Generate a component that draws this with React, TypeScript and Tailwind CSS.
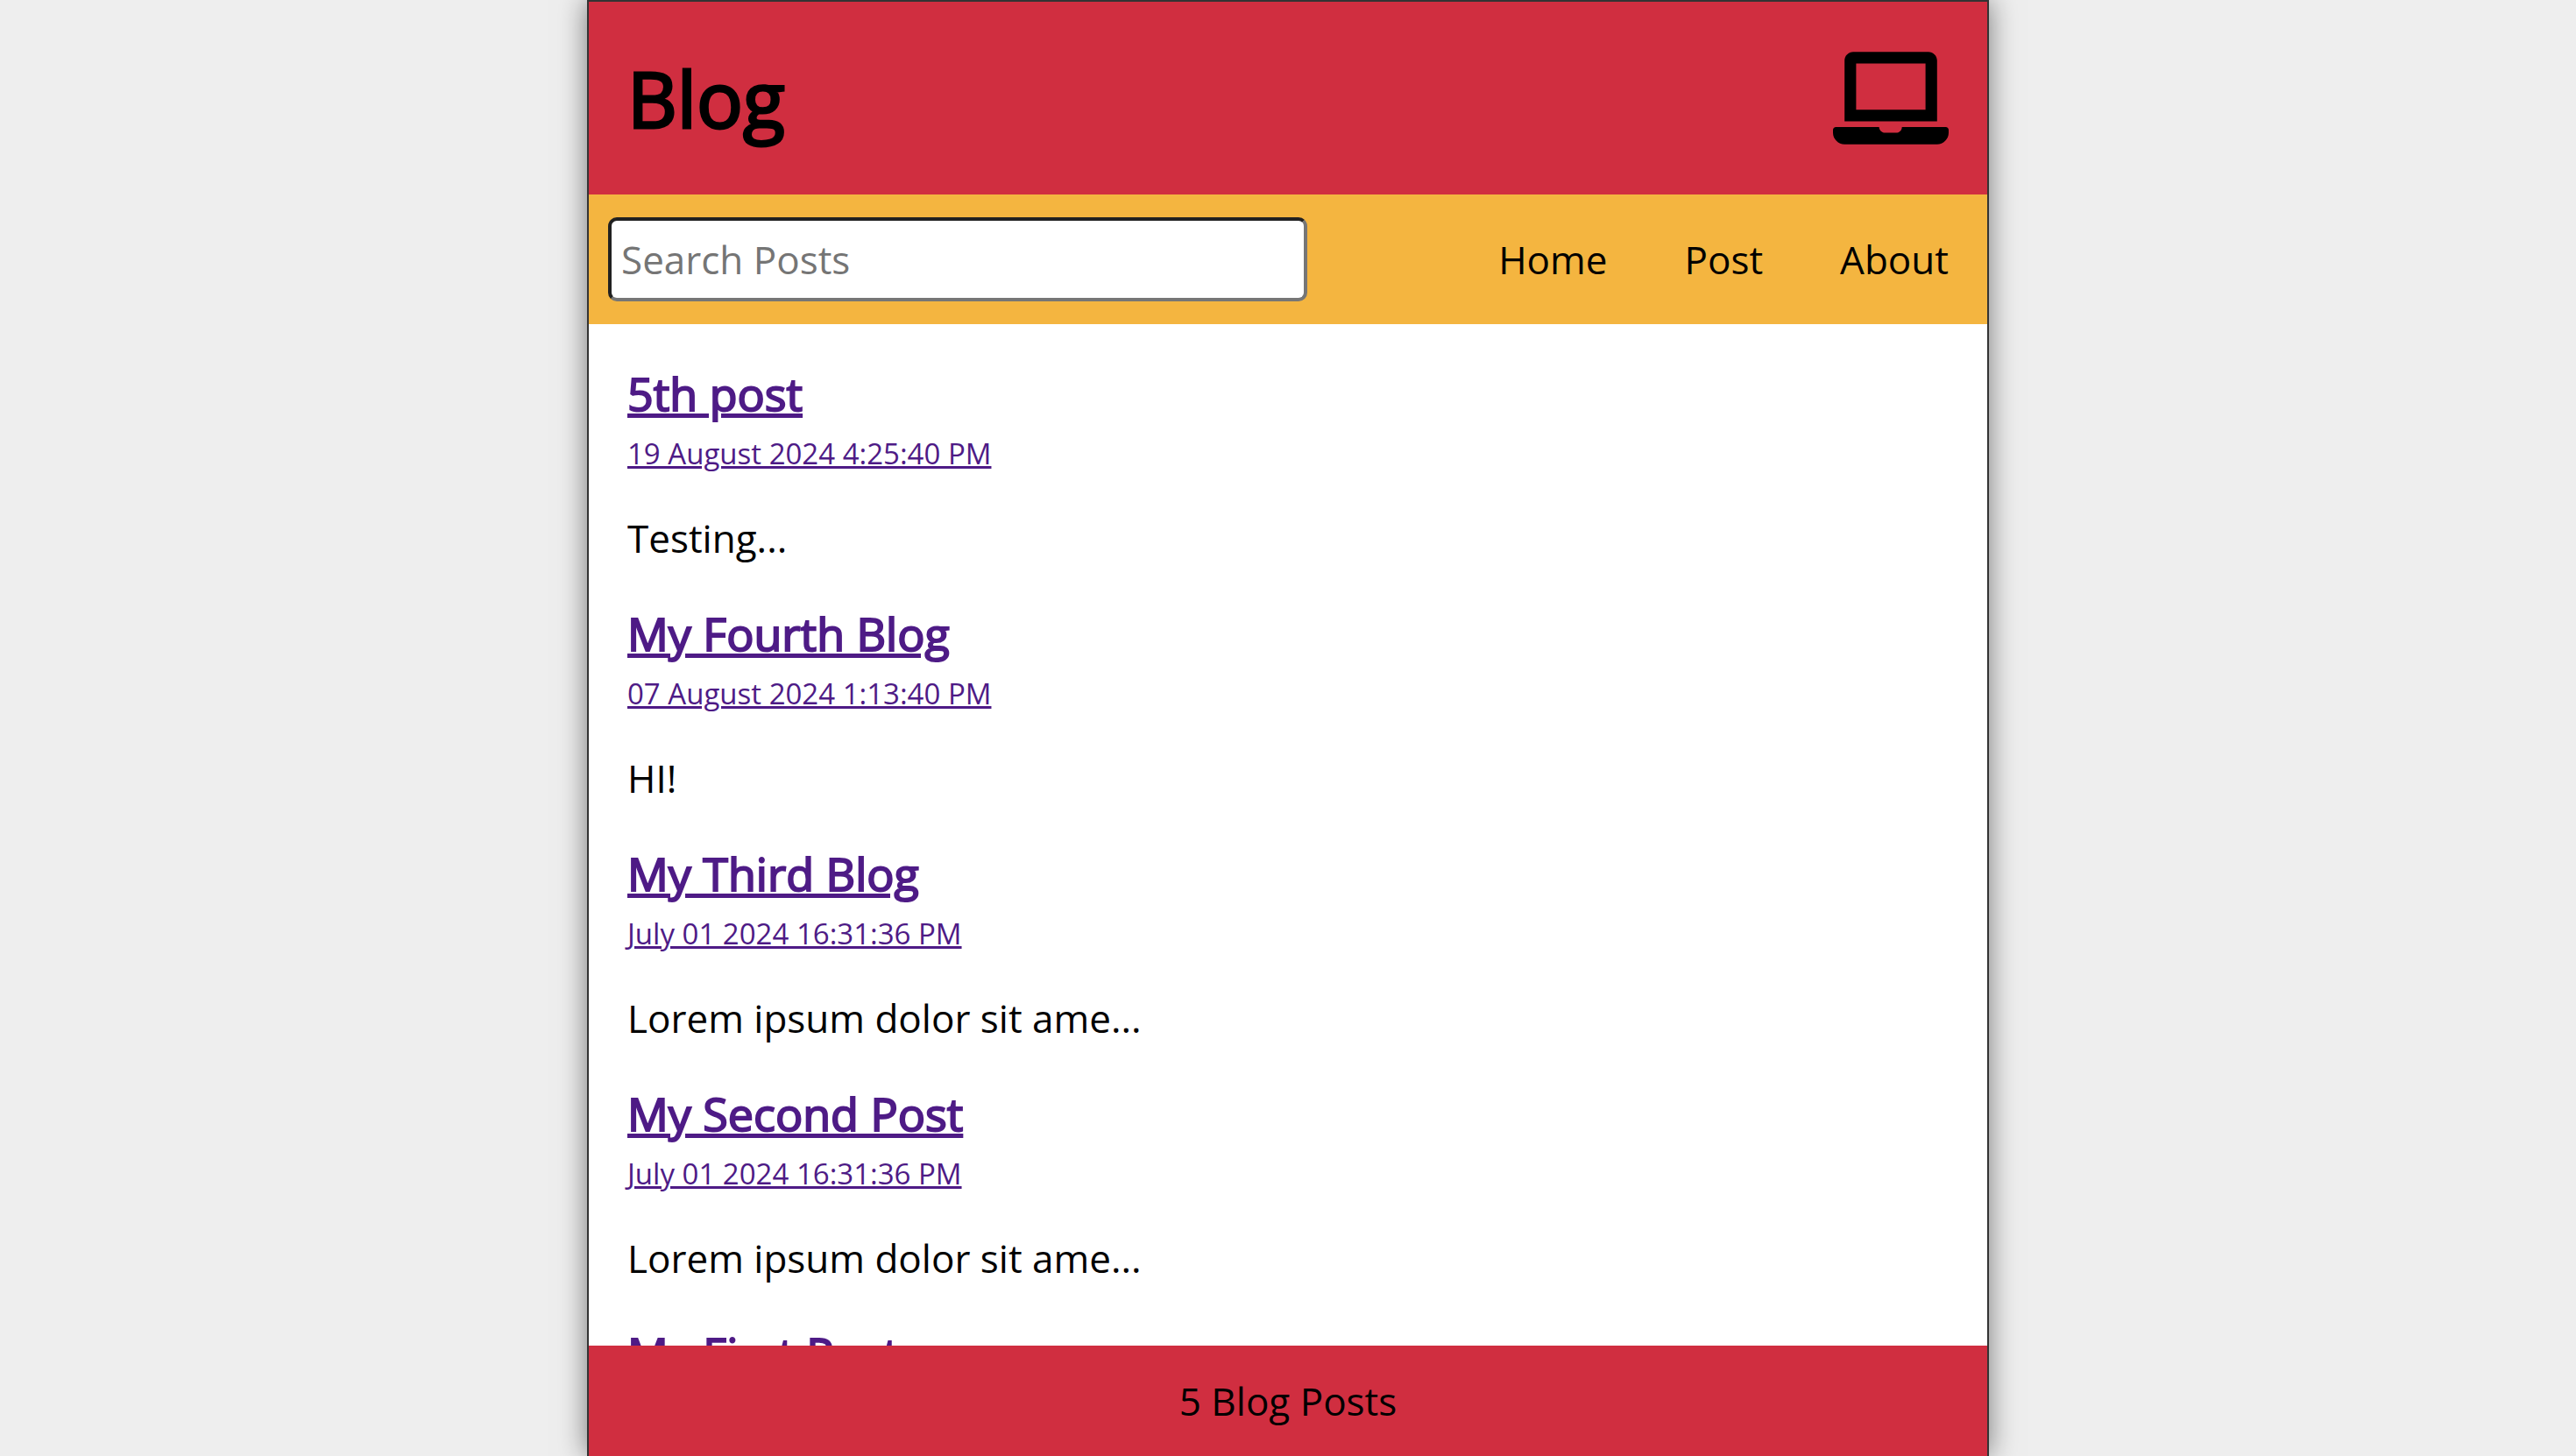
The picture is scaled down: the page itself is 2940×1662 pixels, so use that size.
import { FaLaptop } from "react-icons/fa";

type Post = { title: string; date: string; body: string };

const posts: Post[] = [
  { title: "5th post", date: "19 August 2024 4:25:40 PM", body: "Testing..." },
  { title: "My Fourth Blog", date: "07 August 2024 1:13:40 PM", body: "HI!" },
  { title: "My Third Blog", date: "July 01 2024 16:31:36 PM", body: "Lorem ipsum dolor sit ame..." },
  { title: "My Second Post", date: "July 01 2024 16:31:36 PM", body: "Lorem ipsum dolor sit ame..." },
  { title: "My First Post", date: "July 01 2024 16:31:36 PM", body: "Lorem ipsum dolor sit ame..." },
];

function Header() {
  return (
    <header className="flex items-center justify-between bg-[#d02e40] px-11 py-3">
      <h1 className="text-[88px] leading-[196px] font-normal [-webkit-text-stroke:3px_currentColor]">Blog</h1>
      <FaLaptop className="size-33" />
    </header>
  );
}

function Nav() {
  return (
    <nav className="flex items-center justify-between bg-[#f4b540] py-[26px]">
      <form className="ml-[22px] w-1/2">
        <label htmlFor="search" className="sr-only">Search Posts</label>
        <input
          id="search"
          type="text"
          placeholder="Search Posts"
          className="block h-24 w-full rounded-[10px] border-4 border-t-[#212121] border-r-[#767676] border-b-[#767676] border-l-[#212121] bg-white px-[11px] text-[44px] placeholder:text-[#757575]"
        />
      </form>
      <ul className="flex gap-22 pr-11">
        <li><a href="#home">Home</a></li>
        <li><a href="#post">Post</a></li>
        <li><a href="#about">About</a></li>
      </ul>
    </nav>
  );
}

export default function App() {
  return (
    <div className="flex h-screen justify-center overflow-hidden bg-[#eee] font-['Open_Sans',sans-serif] text-[44px] leading-[60px] text-black">
      <div className="flex w-full max-w-[1600px] flex-col border-2 border-b-0 border-[#333] bg-white shadow-[0_0_30px_rgba(0,0,0,0.5)]">
        <Header />
        <Nav />
        <main className="min-h-0 flex-1 overflow-x-hidden overflow-y-auto px-11 py-11 [scrollbar-width:none]">
          {posts.map((post) => (
            <article key={post.title} className="mb-11">
              <a href="#post" className="text-[#4e1b86]">
                <h2 className="text-[52px] leading-[70px] font-normal underline decoration-[5px] [-webkit-text-stroke:2px_currentColor]">{post.title}</h2>
                <p className="mt-1 text-[33px] leading-[60px] underline decoration-[3px]">{post.date}</p>
              </a>
              <p className="mt-9">{post.body}</p>
            </article>
          ))}
        </main>
        <footer className="bg-[#d02e40] py-[33px] text-center">5 Blog Posts</footer>
      </div>
    </div>
  );
}
